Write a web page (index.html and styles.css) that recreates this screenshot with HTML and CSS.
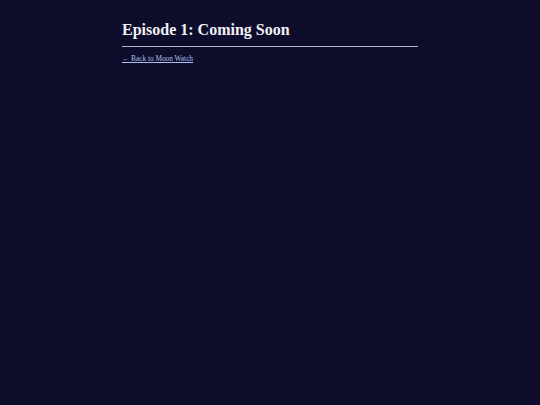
FILE: index.html
```html
<!DOCTYPE html>
<html lang="en">
<head>
<meta charset="utf-8">
<title>Episode 1: Coming Soon</title>
<link rel="stylesheet" href="styles.css">
</head>
<body>
<main class="page">
  <h1 class="title">Episode 1: Coming Soon</h1>
  <hr class="rule">
  <p class="back"><a href="#">&larr; Back to Moon Watch</a></p>
</main>
</body>
</html>
```
FILE: styles.css
```css
html, body {
  margin: 0;
  padding: 0;
  background: #0d0d2b;
  height: 100%;
}
body {
  font-family: "Liberation Serif", "DejaVu Serif", serif;
  color: #f0f0f4;
}
.page {
  width: 296px;
  margin: 0 auto;
  padding-top: 20px;
}
.title {
  font-size: 16px;
  font-weight: bold;
  margin: 0;
  line-height: 20px;
}
.rule {
  border: 0;
  height: 1px;
  background: #b4b4cc;
  margin: 6px 0 0 0;
}
.back {
  margin: 7px 0 0 0;
  font-size: 7.3px;
  line-height: 10px;
}
.back a {
  color: #b0c0ee;
}
```
